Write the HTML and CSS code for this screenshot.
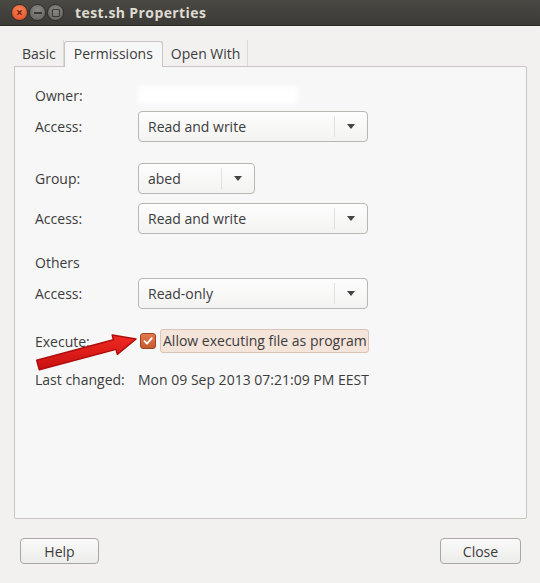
FILE: index.html
```html
<!DOCTYPE html>
<html lang="en">
<head>
    <meta charset="UTF-8">
    <title>test.sh Properties</title>
    <link rel="stylesheet" href="styles.css">
</head>
<body>
    <div class="window">
        <header class="titlebar">
            <div class="wm-buttons">
                <span class="wm wm-close">&#215;</span>
                <span class="wm wm-min"><i></i></span>
                <span class="wm wm-max"><i></i></span>
            </div>
            <h1 class="title">test.sh Properties</h1>
        </header>

        <div class="content">
            <div class="tabs">
                <div class="tab">Basic</div>
                <div class="tab active">Permissions</div>
                <div class="tab">Open With</div>
            </div>

            <div class="panel">
                <div class="row owner">
                    <span class="label">Owner:</span>
                    <span class="blur"></span>
                </div>
                <div class="row access1">
                    <span class="label">Access:</span>
                    <div class="combo wide"><span>Read and write</span><span class="arrow"></span></div>
                </div>

                <div class="row group">
                    <span class="label">Group:</span>
                    <div class="combo narrow"><span>abed</span><span class="arrow"></span></div>
                </div>
                <div class="row access2">
                    <span class="label">Access:</span>
                    <div class="combo wide"><span>Read and write</span><span class="arrow"></span></div>
                </div>

                <div class="row others">
                    <span class="label">Others</span>
                </div>
                <div class="row access3">
                    <span class="label">Access:</span>
                    <div class="combo wide"><span>Read-only</span><span class="arrow"></span></div>
                </div>

                <div class="row execute">
                    <span class="label">Execute:</span>
                    <label class="check">
                        <span class="box">
                            <svg width="12" height="12" viewBox="0 0 12 12"><path d="M2.5 6.2 L5 8.7 L9.8 3.2" fill="none" stroke="#fff" stroke-width="1.8" stroke-linecap="round" stroke-linejoin="round"/></svg>
                        </span>
                        <span class="check-text">Allow executing file as program</span>
                    </label>
                    <svg class="red-arrow" width="110" height="46" viewBox="0 0 110 46">
                        <defs>
                            <linearGradient id="ar" x1="0" y1="0" x2="0" y2="1">
                                <stop offset="0" stop-color="#f02a22"/>
                                <stop offset="1" stop-color="#c81010"/>
                            </linearGradient>
                        </defs>
                        <path d="M1.7 32.2 L78.4 11.8 L77.2 6.9 L101 11 L82.3 26.3 L81 21.4 L4.3 41.8 Z" fill="url(#ar)" stroke="#b00e0e" stroke-width="1.5" stroke-linejoin="round"/>
                    </svg>
                </div>

                <div class="row changed">
                    <span class="label">Last changed:</span>
                    <span class="value">Mon 09 Sep 2013 07:21:09 PM EEST</span>
                </div>
            </div>

            <div class="actions">
                <button class="btn">Help</button>
                <button class="btn">Close</button>
            </div>
        </div>
    </div>
</body>
</html>
```

FILE: styles.css
```css
* { margin: 0; padding: 0; box-sizing: border-box; }

body {
    width: 540px;
    height: 583px;
    background: #f2f1f0;
    font-family: "Open Sans", "DejaVu Sans", sans-serif;
    font-size: 14px;
    color: #3c3c3c;
    overflow: hidden;
}

.window { display: flex; flex-direction: column; height: 100%; }

.titlebar {
    height: 26px;
    background: linear-gradient(#4a4944, #3b3a36);
    border-bottom: 1px solid #2a2a27;
    display: flex;
    align-items: center;
    padding-left: 11px;
}

.wm-buttons { display: flex; gap: 1px; }

.wm {
    width: 17px;
    height: 17px;
    border-radius: 50%;
    display: flex;
    align-items: center;
    justify-content: center;
    background: radial-gradient(circle at 50% 35%, #8a8985, #5e5d59);
    border: 1px solid #2f2e2b;
}

.wm-close {
    background: radial-gradient(circle at 50% 35%, #f6875b, #e0461e);
    color: #7a2008;
    font-size: 12px;
    line-height: 1;
    font-weight: bold;
}

.wm-min i { width: 8px; height: 2px; background: #3a3935; }
.wm-max i { width: 8px; height: 8px; border: 1.5px solid #3a3935; border-radius: 1px; }

.title {
    margin-left: 11px;
    font-size: 14px;
    font-weight: bold;
    color: #dfdbd2;
    letter-spacing: 0.4px;
}

.content {
    flex: 1;
    display: flex;
    flex-direction: column;
    padding: 14px 13px 0 14px;
}

.tabs { display: flex; align-items: flex-end; height: 26px; }

.tab {
    padding: 0 7px 0 8px;
    height: 26px;
    line-height: 28px;
    color: #3c3c3c;
    border-right: 1px solid #dcdad5;
}

.tab.active {
    background: #f7f7f7;
    border: 1px solid #c8c6c2;
    border-bottom: none;
    border-radius: 3px 3px 0 0;
    line-height: 24px;
    padding: 0 9px;
    position: relative;
    top: 1px;
}

.panel {
    height: 453px;
    display: flex;
    flex-direction: column;
    background: #f7f7f7;
    border: 1px solid #c8c6c2;
    border-radius: 0 2px 2px 2px;
    padding: 17px 0 0 20px;
}

.row { display: flex; align-items: center; height: 31px; flex: none; }
.owner { height: 22px; }
.access1 { margin-top: 5px; }
.group { margin-top: 21px; }
.access2 { margin-top: 9px; }
.others { height: 22px; margin-top: 17px; }
.access3 { margin-top: 5px; }
.execute { height: 26px; margin-top: 19px; position: relative; }
.changed { height: 20px; margin-top: 15px; }

.label { width: 103px; flex: none; }

.blur {
    width: 160px;
    height: 18px;
    background: #fff;
    filter: blur(3px);
}

.combo {
    height: 31px;
    display: flex;
    align-items: center;
    justify-content: space-between;
    background: linear-gradient(#fdfdfd, #f3f3f2);
    border: 1px solid #b9b7b3;
    border-radius: 4px;
    padding-left: 9px;
}

.combo.wide { width: 230px; }
.combo.narrow { width: 117px; }

.arrow {
    width: 33px;
    height: 21px;
    border-left: 1px solid #e2e1df;
    position: relative;
}

.arrow::after {
    content: "";
    position: absolute;
    left: 12px;
    top: 8px;
    border-left: 4px solid transparent;
    border-right: 4px solid transparent;
    border-top: 5px solid #444;
}

.check { display: flex; align-items: center; gap: 4px; }

.box {
    width: 16px;
    height: 16px;
    margin-left: 2px;
    border-radius: 3px;
    background: linear-gradient(#e07a4c, #c65a2e);
    border: 1px solid #9c4422;
    display: flex;
    align-items: center;
    justify-content: center;
}

.check-text {
    height: 24px;
    line-height: 22px;
    padding: 0 1px 0 2px;
    background: #f4e4da;
    border: 1px solid #d9c4b8;
    border-radius: 3px;
}

.red-arrow {
    position: absolute;
    left: 0;
    top: 0;
}

.actions {
    display: flex;
    justify-content: space-between;
    padding: 19px 6px 0 6px;
}

.btn {
    width: 79px;
    height: 26px;
    font-family: inherit;
    font-size: 14px;
    color: #3c3c3c;
    background: linear-gradient(#fafafa, #ececeb);
    border: 1px solid #a9a7a3;
    border-radius: 4px;
}

.btn:last-child { width: 81px; }
```
